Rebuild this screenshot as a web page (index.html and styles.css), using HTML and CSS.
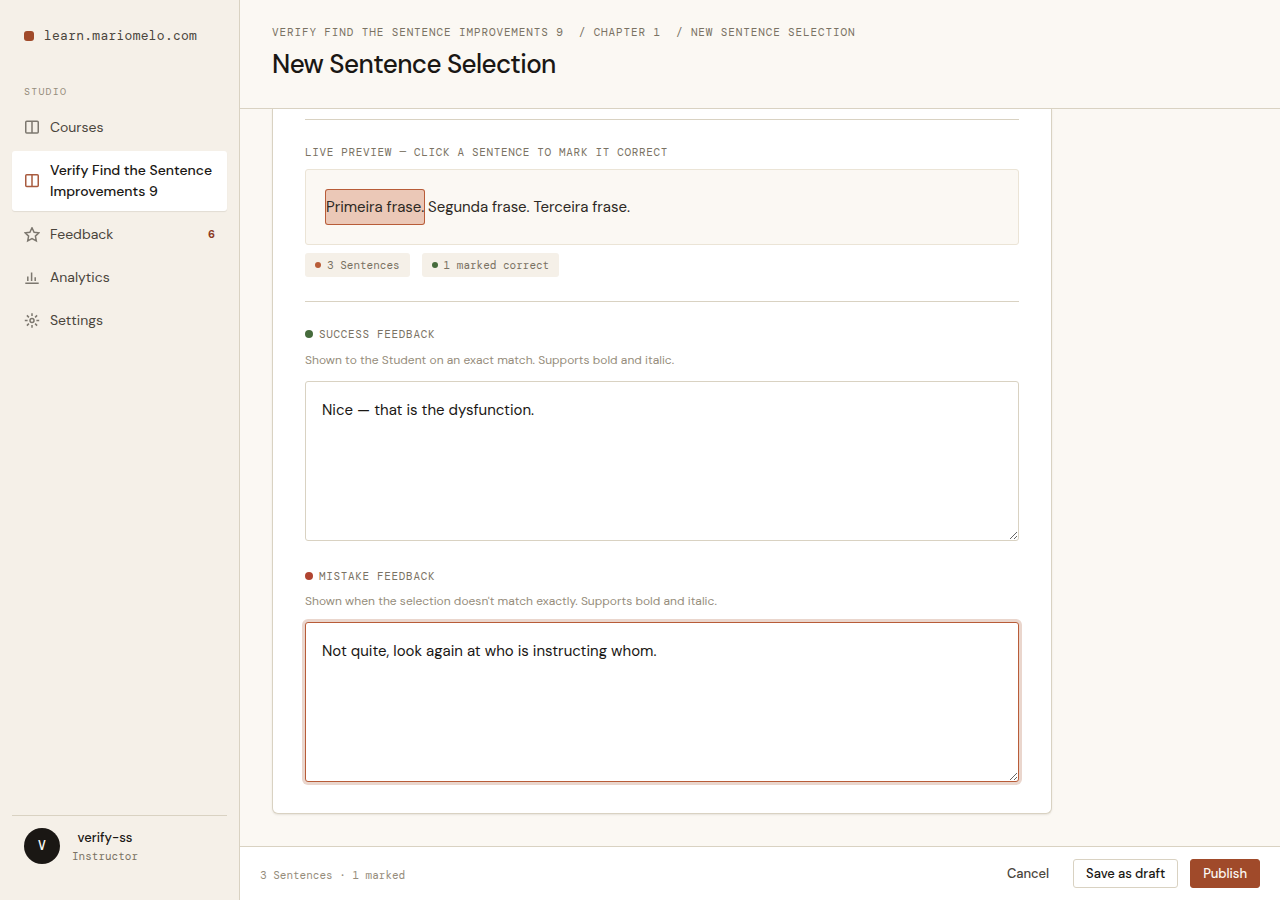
FILE: index.html
```html
<!DOCTYPE html>
<html lang="en">
  <head>
    <meta charset="UTF-8" />
    <meta name="viewport" content="width=device-width, initial-scale=1.0" />
    <title>New Sentence Selection</title>
    <link rel="stylesheet" href="styles.css">
  </head>

  <body>
    <aside class="sidebar">
      <div class="brand"><span class="brand-mark"></span>learn.mariomelo.com</div>
      <div class="nav-label">Studio</div>
      <nav class="nav">
        <a class="nav-item">
          <svg class="icon" viewBox="0 0 16 16"><rect x="1.75" y="1.25" width="12.5" height="11.75" rx="1" /><path d="M8 1.25v11.75" /></svg>
          <span>Courses</span>
        </a>
        <a class="nav-item active">
          <svg class="icon" viewBox="0 0 16 16"><rect x="1.75" y="1.75" width="12.5" height="11.75" rx="1" /><path d="M8 1.75v11.75" /></svg>
          <span>Verify Find the Sentence Improvements 9</span>
        </a>
        <a class="nav-item">
          <svg class="icon" viewBox="0 0 16 16"><path d="M8 .8l2.1 4.4 4.8.6-3.5 3.3.9 4.8L8 11.6l-4.3 2.3.9-4.8L1.1 5.8l4.8-.6z" /></svg>
          <span>Feedback</span>
          <span class="nav-count">6</span>
        </a>
        <a class="nav-item">
          <svg class="icon" viewBox="0 0 16 16"><path d="M1.3 13.2h13.4M3.8 11V6.5M7.6 11V2.5M11.2 11V7.2" /></svg>
          <span>Analytics</span>
        </a>
        <a class="nav-item">
          <svg class="icon" viewBox="0 0 16 16"><circle cx="8" cy="7.5" r="2" /><path d="M8 .3v2.8M8 11.9v2.8M.8 7.5h2.8M12.4 7.5h2.8M2.9 2.4l2 2M11.1 10.6l2 2M2.9 12.6l2-2M11.1 4.4l2-2" /></svg>
          <span>Settings</span>
        </a>
      </nav>
      <div class="user">
        <div class="avatar">V</div>
        <div class="user-info">
          <div class="user-name">verify-ss</div>
          <div class="user-role">Instructor</div>
        </div>
      </div>
    </aside>

    <main class="main">
      <header class="header">
        <div class="breadcrumb">Verify Find the Sentence Improvements 9&nbsp; / Chapter 1&nbsp; / New Sentence Selection</div>
        <h1>New Sentence Selection</h1>
      </header>

      <div class="content">
        <form class="card">
          <section class="preview-section">
            <div class="label">Live preview — click a sentence to mark it correct</div>
            <div class="preview"><span class="marked">Primeira frase.</span> <span>Segunda frase.</span> <span>Terceira frase.</span></div>
            <div class="chips">
              <span class="chip"><i class="dot orange"></i>3 Sentences</span>
              <span class="chip"><i class="dot green"></i>1 marked correct</span>
            </div>
          </section>
          <section class="feedback-section">
            <div class="field">
              <label class="label" for="success"><i class="dot green"></i>Success feedback</label>
              <p class="hint">Shown to the Student on an exact match. Supports bold and italic.</p>
              <textarea id="success">Nice — that is the dysfunction.</textarea>
            </div>
            <div class="field">
              <label class="label" for="mistake"><i class="dot red"></i>Mistake feedback</label>
              <p class="hint">Shown when the selection doesn't match exactly. Supports bold and italic.</p>
              <textarea id="mistake" class="focused">Not quite, look again at who is instructing whom.</textarea>
            </div>
          </section>
        </form>
      </div>

      <footer class="footer">
        <span class="status">3 Sentences · 1 marked</span>
        <div class="actions">
          <button type="button" class="button ghost">Cancel</button>
          <button type="button" class="button">Save as draft</button>
          <button type="button" class="button primary">Publish</button>
        </div>
      </footer>
    </main>
  </body>
</html>
```
FILE: styles.css
```css
:root {
  --sans: "DM Sans", Inter, sans-serif;
  --mono: "DM Mono", "Liberation Mono", monospace;
  --ink: #1a1714;
  --text: #4a453c;
  --muted: #7a7263;
  --faint: #968d7c;
  --line: #d9d2c2;
  --cream: #fbf8f3;
  --sand: #f5f0e8;
  --rust: #a04a2a;
}

* {
  box-sizing: border-box;
}

body {
  margin: 0;
  height: 100vh;
  display: flex;
  overflow: hidden;
  background-color: var(--cream);
  color: var(--ink);
  font-family: var(--sans);
}

p, h1 {
  margin: 0;
}

.sidebar {
  width: 240px;
  flex-shrink: 0;
  display: flex;
  flex-direction: column;
  padding: 24px 12px;
  background-color: var(--sand);
  border-right: 1px solid var(--line);
}

.brand {
  display: flex;
  align-items: center;
  gap: 10px;
  height: 24px;
  padding: 0 12px 2px;
  font: 13px/19px var(--mono);
  letter-spacing: 0.02em;
  color: var(--text);
}

.brand-mark {
  width: 10px;
  height: 10px;
  margin-top: 2px;
  border-radius: 3px;
  background-color: var(--rust);
}

.nav-label {
  margin: 35px 12px 8px;
  font: 10px/17px var(--mono);
  letter-spacing: 0.12em;
  text-transform: uppercase;
  color: var(--faint);
}

.nav {
  display: flex;
  flex-direction: column;
  gap: 4px;
}

.nav-item {
  display: flex;
  align-items: center;
  gap: 10px;
  padding: 9px 12px;
  border-radius: 3px;
  font-size: 14px;
  line-height: 21px;
  color: var(--text);
}

.nav-item.active {
  background-color: white;
  color: var(--ink);
  font-weight: 500;
  box-shadow: 0 1px 1px rgba(60, 50, 30, 0.1);
}

.icon {
  width: 16px;
  height: 16px;
  flex-shrink: 0;
  fill: none;
  stroke: currentColor;
  stroke-width: 1.5;
  opacity: 0.7;
}

.active .icon {
  color: var(--rust);
  opacity: 0.9;
}

.nav-count {
  margin-left: auto;
  font-size: 11px;
  font-weight: 700;
  color: #8b3a1f;
}

.user {
  display: flex;
  align-items: center;
  gap: 12px;
  margin-top: auto;
  padding: 12px;
  border-top: 1px solid var(--line);
}

.avatar {
  width: 36px;
  height: 36px;
  border-radius: 50%;
  background-color: var(--ink);
  color: var(--cream);
  font: 700 13px/35px var(--mono);
  text-align: center;
}

.user-info {
  margin-bottom: -1px;
  text-align: center;
}

.user-name {
  font-size: 13px;
  font-weight: 500;
  line-height: 20px;
}

.user-role {
  font: 11px/17px var(--mono);
  color: var(--muted);
}

.main {
  flex: 1;
  display: flex;
  flex-direction: column;
}

.header {
  height: 109px;
  flex-shrink: 0;
  padding: 24px 32px;
  border-bottom: 1px solid var(--line);
}

.breadcrumb {
  font: 11px/17px var(--mono);
  letter-spacing: 0.08em;
  text-transform: uppercase;
  color: var(--muted);
}

h1 {
  margin-top: 8px;
  font-size: 26px;
  font-weight: 500;
  line-height: 31px;
  letter-spacing: -0.6px;
}

.content {
  flex: 1;
  min-height: 0;
  padding: 0 32px;
  overflow: hidden;
}

.card {
  width: 780px;
  padding: 10px 32px 31px;
  background-color: white;
  border: 1px solid var(--line);
  border-top: none;
  border-radius: 0 0 6px 6px;
  box-shadow: 0 1px 2px rgba(60, 50, 30, 0.1);
}

.preview-section {
  border-top: 1px solid var(--line);
  padding: 24px 0;
}

.feedback-section {
  border-top: 1px solid var(--line);
  padding-top: 24px;
  display: flex;
  flex-direction: column;
  gap: 26px;
}

.label {
  display: flex;
  align-items: center;
  gap: 6px;
  font: 11px/17px var(--mono);
  letter-spacing: 0.06em;
  text-transform: uppercase;
  color: var(--muted);
}

.field + .field .label {
  margin: 1px 0 -1px;
}

.dot {
  width: 6px;
  height: 6px;
  border-radius: 50%;
}

.label .dot {
  width: 8px;
  height: 8px;
  margin-bottom: 1px;
}

.dot.orange {
  background-color: #b85c38;
}

.dot.green {
  background-color: #466b3c;
}

.dot.red {
  background-color: #b04430;
}

.preview {
  margin-top: 8px;
  padding: 20px;
  border: 1px solid #ebe4d6;
  border-radius: 3px;
  background-color: var(--cream);
  font-size: 15px;
  line-height: 34px;
  letter-spacing: -0.05px;
  color: #2d2924;
}

.marked {
  display: inline-block;
  border-radius: 2px;
  background-color: #ebc8b7;
  box-shadow: 0 0 0 1px #b85c38;
}

.chips {
  display: flex;
  gap: 12px;
  margin-top: 8px;
}

.chip {
  display: flex;
  align-items: center;
  gap: 6px;
  padding: 0 10px;
  border-radius: 3px;
  background-color: var(--sand);
  font: 11px/24px var(--mono);
  color: var(--muted);
}

.hint {
  margin: 8px 0 12px;
  font-size: 12px;
  line-height: 18px;
  letter-spacing: 0.02px;
  color: var(--faint);
}

textarea {
  display: block;
  width: 100%;
  height: 160px;
  padding: 16px;
  border: 1px solid var(--line);
  border-radius: 3px;
  background-color: white;
  color: var(--ink);
  font: 15px/24px var(--sans);
  outline: none;
}

textarea.focused {
  border-color: #b85c38;
  box-shadow: 0 0 0 3px #ead6cd;
}

.footer {
  height: 54px;
  flex-shrink: 0;
  display: flex;
  align-items: center;
  justify-content: space-between;
  padding: 0 20px;
  border-top: 1px solid var(--line);
  background-color: white;
}

.status {
  padding-top: 2px;
  font: 11px var(--mono);
  color: var(--faint);
}

.actions {
  display: flex;
  gap: 12px;
}

.button {
  height: 29px;
  padding: 0 12px;
  border: 1px solid var(--line);
  border-radius: 3px;
  background-color: white;
  color: var(--ink);
  font: 500 13px var(--sans);
  letter-spacing: -0.05px;
  cursor: pointer;
}

.button.ghost {
  padding: 0 11px;
  border-color: transparent;
  color: var(--text);
}

.button.primary {
  border-color: var(--rust);
  background-color: var(--rust);
  color: var(--cream);
}
```
